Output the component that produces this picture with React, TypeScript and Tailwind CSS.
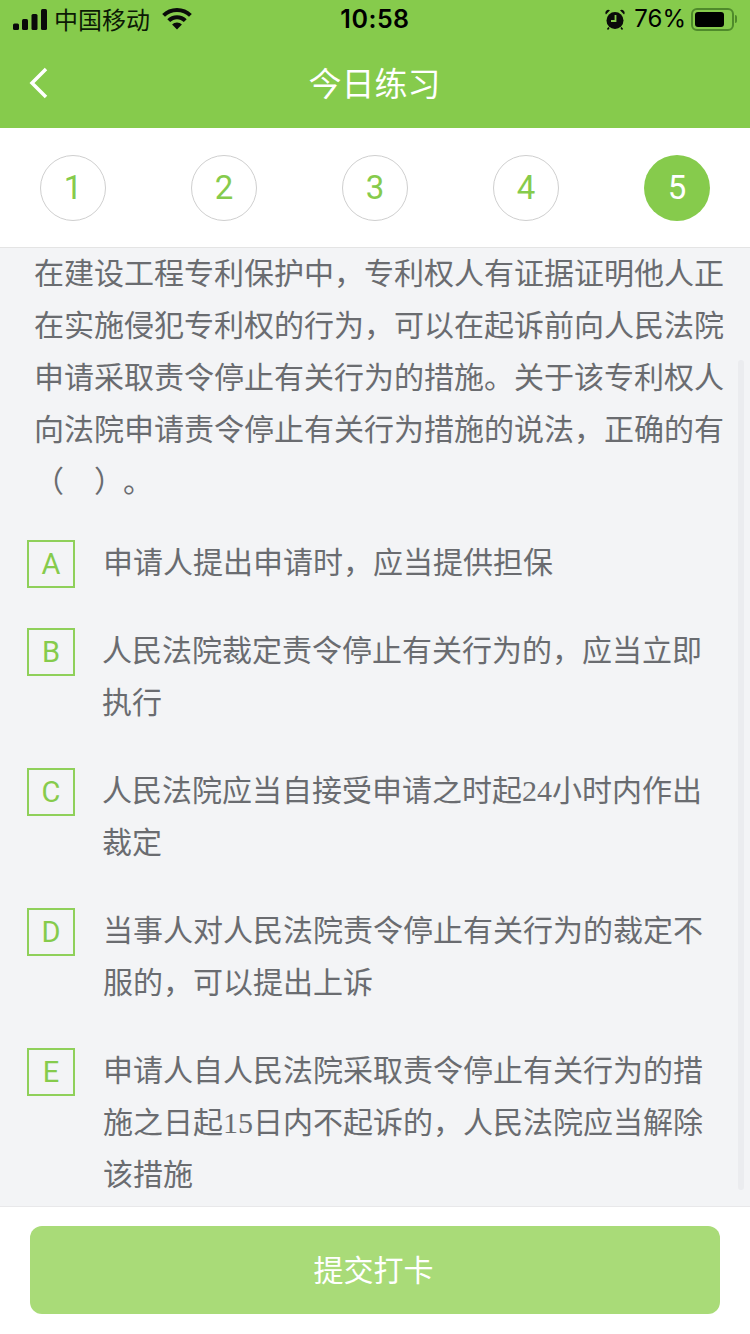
import React from 'react';

const cjk = { fontFamily: '"Noto Sans CJK SC", sans-serif' };

const Digits = ({ children }: { children: React.ReactNode }) => (
    <span className="font-['Liberation_Serif',serif] leading-none">{children}</span>
);

const options: { key: string; textClass: string; lines: React.ReactNode[] }[] = [
    { key: 'A', textClass: 'ml-[28px]', lines: ['申请人提出申请时，应当提供担保'] },
    { key: 'B', textClass: 'ml-[27px]', lines: ['人民法院裁定责令停止有关行为的，应当立即', '执行'] },
    { key: 'C', textClass: 'ml-[27px]', lines: [<>人民法院应当自接受申请之时起<Digits>24</Digits>小时内作出</>, '裁定'] },
    { key: 'D', textClass: 'ml-[28px]', lines: ['当事人对人民法院责令停止有关行为的裁定不', '服的，可以提出上诉'] },
    { key: 'E', textClass: 'ml-[28px]', lines: ['申请人自人民法院采取责令停止有关行为的措', <>施之日起<Digits>15</Digits>日内不起诉的，人民法院应当解除</>, '该措施'] },
];

const question: React.ReactNode[] = [
    '在建设工程专利保护中，专利权人有证据证明他人正',
    '在实施侵犯专利权的行为，可以在起诉前向人民法院',
    '申请采取责令停止有关行为的措施。关于该专利权人',
    '向法院申请责令停止有关行为措施的说法，正确的有',
    <>（　）<span className="ml-[14px]">。</span></>,
];

const StatusBar = () => (
    <div className="h-[40px] flex items-center justify-between pl-[13px] pr-[13px] pb-[2px] text-[#0c1a05]">
        <div className="flex items-center w-[250px]">
            <svg width="34" height="21" viewBox="0 0 34 21" fill="#0a0a0a">
                <rect x="0" y="14.500" width="6" height="6.500" rx="1.500" />
                <rect x="9" y="10" width="6" height="11" rx="1.500" />
                <rect x="18.500" y="5" width="6" height="16" rx="1.500" />
                <rect x="28" y="0" width="6" height="21" rx="1.500" />
            </svg>
            <span className="ml-[7px] text-[24px] leading-[30px]" style={cjk}>中国移动</span>
            <svg className="ml-[12px]" width="30" height="22" viewBox="0 0 30 22" fill="#0a0a0a">
                <path d="M15 0C9.2 0 4 2.2 0.2 5.9L3 8.8C6.1 5.8 10.3 4 15 4s8.9 1.8 12 4.8l2.8-2.9C26 2.2 20.8 0 15 0z" />
                <path d="M15 7.3c-3.8 0-7.2 1.5-9.7 3.9l2.9 2.9C10 12.400 12.400 11.300 15 11.300s5 1.100 6.800 2.800l2.900-2.900C22.200 8.800 18.800 7.300 15 7.300z" />
                <path d="M15 14.600c-1.900 0-3.600 .8-4.900 2L15 21.600l4.900-5c-1.300-1.200-3-2-4.900-2z" />
            </svg>
        </div>
        <span className="text-[25px] leading-[30px] font-semibold text-black font-['Inter',sans-serif] tracking-[0.5px]">10:58</span>
        <div className="flex items-center justify-end w-[250px]">
            <svg width="20" height="21" viewBox="0 0 20 21" fill="#0a0a0a">
                <circle cx="10" cy="11.500" r="8.500" />
                <path d="M1 5.500 L5 1.200 A3 3 0 0 0 1 5.500z M19 5.500 L15 1.200 A3 3 0 0 1 19 5.500z" />
                <path d="M10.500 6v6H6" fill="none" stroke="#85cc4a" strokeWidth="1.800" />
                <path d="M4 18.500 L2.500 20.500 M16 18.500 L17.500 20.500" stroke="#0a0a0a" strokeWidth="1.600" />
            </svg>
            <span className="ml-[9px] text-[24px] leading-[30px] font-['Inter',sans-serif] text-black">76%</span>
            <div className="ml-[5px] w-[43px] h-[23px] rounded-[6px] border-2 border-[#4f8a2b] p-[2px]">
                <div className="w-[29px] h-full rounded-[3px] bg-black" />
            </div>
            <div className="ml-[1px] w-[2px] h-[8px] rounded-r-full bg-[#4f8a2b]" />
        </div>
    </div>
);

export default function App() {
    return (
        <div className="w-[750px] h-[1334px] flex flex-col overflow-hidden bg-[#f3f4f6]" style={cjk}>
            <div className="h-[128px] shrink-0 bg-[#86cb4c]">
                <StatusBar />
                <div className="relative h-[88px] flex items-center justify-center pb-[4px] pr-[1px]">
                    <svg className="absolute left-[29px] top-[27px]" width="20" height="32" viewBox="0 0 20 32" fill="none" stroke="#fff" strokeWidth="3.500">
                        <path d="M17 2 L3 16 L17 30" />
                    </svg>
                    <span className="text-[33px] leading-[44px] font-normal text-white">今日练习</span>
                </div>
            </div>

            <div className="h-[120px] shrink-0 bg-white border-b border-[#e4e4e4] flex items-center justify-between px-[40px]">
                {[1, 2, 3, 4, 5].map((n) => (
                    <div
                        key={n}
                        className={
                            n === 5
                                ? 'w-[66px] h-[66px] rounded-full bg-[#86cb4c] text-white flex items-center justify-center pt-[1px] text-[33px] font-["Roboto",sans-serif]'
                                : 'w-[66px] h-[66px] rounded-full border border-[#cfcfcf] text-[#86cb4c] flex items-center justify-center pt-[1px] text-[33px] font-["Roboto",sans-serif]'
                        }
                    >
                        {n}
                    </div>
                ))}
            </div>

            <div className="relative flex-1 min-h-0 overflow-hidden text-[#6a6c70] text-[30px] leading-[52px]">
                <div className="absolute right-[6px] top-[112px] w-[6px] h-[830px] rounded-full bg-[#ebecef]" />
                <div className="-mt-[3px] pl-[34px] whitespace-nowrap">
                    {question.map((line, i) => (
                        <div key={i}>{line}</div>
                    ))}
                </div>
                <div className="mt-[29px] pl-[27px] flex flex-col gap-[36px]">
                    {options.map((o) => (
                        <div key={o.key} className="flex items-start">
                            <div className="shrink-0 mt-[6px] -mb-[2px] w-[48px] h-[48px] border-2 border-[#8fd05a] flex items-center justify-center text-[29px] leading-none font-['Roboto',sans-serif] text-[#86cb4c]">
                                {o.key}
                            </div>
                            <div className={o.textClass + ' whitespace-nowrap'}>
                                {o.lines.map((line, i) => (
                                    <div key={i}>{line}</div>
                                ))}
                            </div>
                        </div>
                    ))}
                </div>
            </div>

            <div className="h-[128px] shrink-0 bg-white border-t border-[#e8e8ea] pt-[19px] px-[30px]">
                <button className="w-full h-[88px] rounded-[12px] bg-[#a9db78] text-white text-[30px] font-normal flex items-center justify-center pb-[3px] pr-[3px]">
                    提交打卡
                </button>
            </div>
        </div>
    );
}
